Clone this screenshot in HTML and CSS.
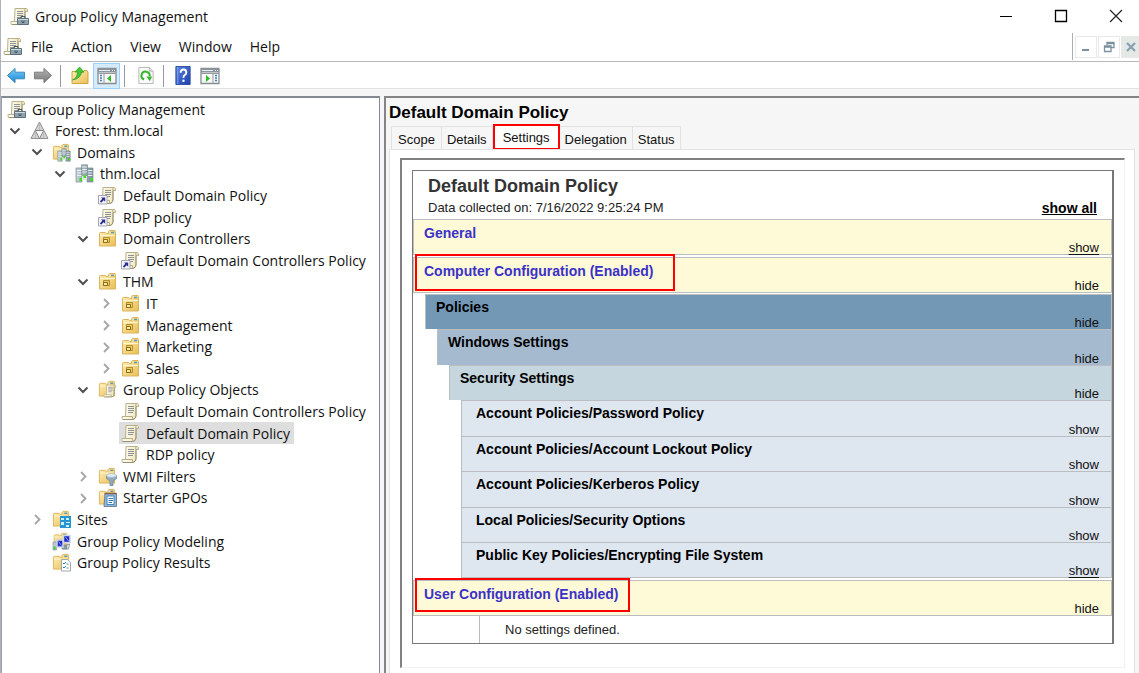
FILE: index.html
```html
<!DOCTYPE html>
<html lang="en">
<head>
<meta charset="utf-8">
<meta name="viewport" content="width=device-width, initial-scale=1">
<title>Group Policy Management</title>
<link rel="stylesheet" href="styles.css">
</head>
<body>
<svg class="sprite" aria-hidden="true">
  <defs>
    <linearGradient id="gold" x1="0" y1="0" x2="1" y2="1"><stop offset="0" stop-color="#fff0b8"/><stop offset="1" stop-color="#e9bd55"/></linearGradient>
    <linearGradient id="paper" x1="0" y1="0" x2="1" y2="0"><stop offset="0" stop-color="#fffef4"/><stop offset="1" stop-color="#efe6bd"/></linearGradient>
    <linearGradient id="blue" x1="0" y1="0" x2="0" y2="1"><stop offset="0" stop-color="#7fd0f8"/><stop offset="1" stop-color="#1385d6"/></linearGradient>
    <linearGradient id="gray" x1="0" y1="0" x2="0" y2="1"><stop offset="0" stop-color="#b5b5b5"/><stop offset="1" stop-color="#777777"/></linearGradient>
    <linearGradient id="help" x1="0" y1="0" x2="1" y2="1"><stop offset="0" stop-color="#5b86e0"/><stop offset="1" stop-color="#1c3fae"/></linearGradient>
    <linearGradient id="steel" x1="0" y1="0" x2="1" y2="0"><stop offset="0" stop-color="#c3d2d8"/><stop offset="1" stop-color="#7c909a"/></linearGradient>
  </defs>
  <symbol id="scroll" viewBox="0 0 19 19">
    <path d="M5 1.500h11.500q1.500.5 1 3h-2.500v9.500q-.5 3-3 3.500h-10q-1.500-1-1-3h3.500z" fill="url(#paper)" stroke="#b9b18a"/>
    <path d="M1.500 17.500H12q2.500-.5 3-3.500V4.500" fill="none" stroke="#9a9272"/>
    <path d="M4.500 14.500h7q-.5 2 .7 3M15 4.500q-1-2 .8-3" fill="none" stroke="#b5ac82"/>
    <path d="M7 4.500h6M7 6.500h6M7 8.500h6M7 10.500h5" stroke="#8f9297"/>
  </symbol>
  <symbol id="gpm" viewBox="0 0 19 19">
    <use href="#scroll" width="19" height="19"/>
    <path d="M7.500 11.500h11v6h-11z" fill="#8fa3ae" stroke="#5c707b"/>
    <path d="M8 12.500h10" stroke="#ccd9e0"/>
    <path d="M11 11V9.500h4V11M12 13.500v2h2v-2" fill="none" stroke="#465862"/>
  </symbol>
  <symbol id="folder" viewBox="0 0 19 19">
    <path d="M1.500 4.500q0-1 1-1h5l1 1h2V2.500l1-1h5.500l.5 1v14.500h-16z" fill="url(#gold)" stroke="#dbb45a"/>
    <path d="M2 6.500h15" stroke="#fff5cf"/><path d="M13 3.500h3" stroke="#4c9ac6" stroke-width="1.500"/>
  </symbol>
  <symbol id="ou" viewBox="0 0 19 19">
    <use href="#folder" width="19" height="19"/>
    <path d="M5.500 8.500h6v5h-6z" fill="#efcb62" stroke="#b08d2e"/><path d="M5.500 10.500h4v3h-4z" fill="#fae99e" stroke="#8c6c18"/>
  </symbol>
  <symbol id="servers" viewBox="0 0 19 19">
    <g fill="url(#steel)" stroke="#7b8b94" stroke-width=".7"><path d="M6.500.8h6v11h-6zM1 4h6v14H1zM12 4h6v14h-6z"/></g>
    <path d="M7 12h5v4H7z" fill="#dfe7ea"/>
    <path d="M2 6.500h4.500M2 9h4.500M2 11.500h4.500M12.800 6.500h4.500M12.800 9h4.500M12.800 11.500h4.500M7.200 3h4.600M7.200 5.500h4.600M7.200 8h4.600" stroke="#e8f2f5"/>
    <path d="M4.500 14h2.500v3H4.500zM15.500 14H18v3h-2.500zM8.500 11H11v3H8.500z" fill="#46dc17"/>
  </symbol>
  <symbol id="domains" viewBox="0 0 19 19"><use href="#folder" width="18" height="18"/><use href="#servers" x="5" y="5" width="14" height="14"/></symbol>
  <symbol id="forest" viewBox="0 0 19 19">
    <path d="M9.500 1 18 17.500H1z" fill="#d3d3d3" stroke="#909090"/><path d="M5.300 9.500h8.400l-4.200 8z" fill="#fafafa" stroke="#858585"/><path d="M9.500 2v7M5.300 10v7M13.700 10v7" fill="none" stroke="#b4b4b4" stroke-width=".8"/>
  </symbol>
  <symbol id="link" viewBox="0 0 19 19">
    <use href="#scroll" width="19" height="19"/>
    <path d="M.5 9.500H9V18H.5z" fill="#f5f5fb" stroke="#a5a5b5"/><path d="m2.500 16 3.500-3.500" fill="none" stroke="#292e8d" stroke-width="1.800"/><path d="M3 11.500h4.200v4.200z" fill="#292e8d"/>
  </symbol>
  <symbol id="gpos" viewBox="0 0 19 19"><use href="#folder" width="18" height="18"/><use href="#scroll" x="5" y="4" width="14" height="14"/></symbol>
  <symbol id="wmi" viewBox="0 0 19 19"><use href="#folder" width="18" height="18"/><path d="M8.500 8.500h10v3L15 14v4.500h-3V14l-3.500-2.500z" fill="#91a9ba" stroke="#7d95a6"/><ellipse cx="13.500" cy="8.500" rx="5" ry="2" fill="#dcebf4" stroke="#9ab0bf" stroke-width=".6"/></symbol>
  <symbol id="starter" viewBox="0 0 19 19"><use href="#folder" width="18" height="18"/><path d="M7 5.500h11.500v13H6z" fill="#8fb9dc" stroke="#7a7f8c"/><path d="M9 8h7v8.500H9z" fill="#f5fbff" stroke="#4887bb"/><path d="M10.500 10.500H15M10.500 12.500H15M10.500 14.500H14" stroke="#3b78ab"/><path d="M6.500 5.500h12" stroke="#8b5a45" stroke-width="1.500"/></symbol>
  <symbol id="sites" viewBox="0 0 19 19"><use href="#folder" width="18" height="18"/><path d="M8 6h11v12H8z" fill="#2994d2"/><path d="M9 8h3v2H9zM14 8h3v2h-3zM9 12h3v3H9zM14 12h4v1h-4zM14 15h3v2h-3z" fill="#c9f1ff"/></symbol>
  <symbol id="modeling" viewBox="0 0 19 19"><use href="#folder" width="17" height="15"/><path d="M1 10h3.500v8H1zM10 13h5v4h-5z" fill="url(#steel)" stroke="#889" stroke-width=".6"/><path d="M5 8h6v7H5zM11.500 3.500H18v7h-6.500z" fill="#2429c9" stroke="#ccd5e9" stroke-width="1.500"/><path d="m6.500 9.500 3 4M13.500 5l3 4" stroke="#77a6ff"/><path d="M1.500 14.500H3.500v3h-2z" fill="#35d42a"/><path d="m14.500 13 3-1-1 5h-6" fill="none" stroke="#8496a0"/></symbol>
  <symbol id="results" viewBox="0 0 19 19"><use href="#folder" width="18" height="18"/><path d="M9.500 6.500h6l3 3v8.500h-9z" fill="#fff" stroke="#a1a8ad"/><path d="m11 10 1 1 2-2M11 14l1 1 2-2" fill="none" stroke="#2486ba"/><path d="M14.500 11h2M14.500 15h2" stroke="#588199"/></symbol>
  <symbol id="back" viewBox="0 0 20 20"><path d="m1 10 8-7.500v4h10v7H9v4z" fill="url(#blue)" stroke="#3a86b5"/></symbol>
  <symbol id="forward" viewBox="0 0 20 20"><path d="m19 10-8-7.500v4H1v7h10v4z" fill="url(#gray)" stroke="#777"/></symbol>
  <symbol id="up" viewBox="0 0 19 19"><path d="M1.500 5.500h6l1 1h4l1-2h3l1 2v11h-16z" fill="url(#gold)" stroke="#d1a542"/><path d="M2 14Q7 12 7 6H4.500L9 1l4.500 5H11Q10.500 12.500 2 14" fill="#45c735" stroke="#279924" stroke-width=".7"/></symbol>
  <symbol id="pane" viewBox="0 0 20 18"><path d="M1 2h18v15H1z" fill="#f8f8f8" stroke="#878c93" stroke-width="1.300"/><path d="M1 2h18v4H1z" fill="#8d949d"/><path d="M2 4h11M15 4h1M17 4h1" stroke="#e6edf4"/><path d="M7 7v10M1 7h18" stroke="#999"/><path d="M3 9h2M3 11.500h2M3 14h2" stroke="#367fbd" stroke-width="1.400"/><path d="M14 8.500v7L10 12z" fill="#2ebc26"/></symbol>
  <symbol id="pane-right" viewBox="0 0 20 18"><path d="M1 2h18v15H1z" fill="#f8f8f8" stroke="#878c93" stroke-width="1.300"/><path d="M1 2h18v4H1z" fill="#8d949d"/><path d="M2 4h11M15 4h1M17 4h1" stroke="#e6edf4"/><path d="M13 7v10M1 7h18" stroke="#999"/><path d="M15 9h2M15 11.500h2M15 14h2" stroke="#367fbd" stroke-width="1.400"/><path d="M6 8.500v7l4-3.500z" fill="#2ebc26"/></symbol>
  <symbol id="refresh" viewBox="0 0 18 20"><path d="M1.500 1.500h11l4 4v13h-15z" fill="#fafafa" stroke="#b4b4b4"/><path d="M12.500 1.500v4h4" fill="#ddd" stroke="#bbb"/><path d="M7 14.200a4.300 4.300 0 1 1 5.800-3.500" fill="none" stroke="#35b72d" stroke-width="2.200"/><path d="M9.500 11h6L13 16z" fill="#35b72d"/></symbol>
  <symbol id="question" viewBox="0 0 18 20"><path d="M1.500.5h15v19h-15z" fill="url(#help)" stroke="#2c4c9d"/><path d="M3.500 1v18" stroke="#86a6ef"/><path d="M6.500 7q0-3.300 3-3.300T12.500 7q0 1.500-1.600 2.500T9.500 12.500" fill="none" stroke="#fff" stroke-width="2"/><circle cx="9.500" cy="15.500" r="1.300" fill="#fff"/></symbol>
  <symbol id="open" viewBox="0 0 12 12"><path d="m1.500 3.500 4.500 4.500 4.500-4.500" fill="none" stroke="#505050" stroke-width="2"/></symbol>
  <symbol id="closed" viewBox="0 0 12 12"><path d="m4 2 4.500 4.500L4 11" fill="none" stroke="#a5a5a5" stroke-width="1.800"/></symbol>
</svg>

<div class="window">
  <header class="titlebar">
    <svg class="icon"><use href="#gpm"/></svg>
    <h1 class="window-title">Group Policy Management</h1>
    <div class="window-buttons">
      <button aria-label="Minimize"><svg viewBox="0 0 14 14"><path d="M1 7.500h12" stroke="#000" fill="none"/></svg></button>
      <button aria-label="Maximize"><svg viewBox="0 0 14 14"><path d="M1.500 1.500h11v11h-11z" stroke="#000" fill="none" stroke-width="1.300"/></svg></button>
      <button aria-label="Close"><svg viewBox="0 0 14 14"><path d="m1 1 12 12M13 1 1 13" stroke="#222" fill="none" stroke-width="1.200"/></svg></button>
    </div>
  </header>

  <nav class="menubar" aria-label="Menu">
    <svg class="icon"><use href="#gpm"/></svg>
    <div class="menus"><button>File</button><button>Action</button><button>View</button><button>Window</button><button>Help</button></div>
    <div class="child-buttons">
      <button aria-label="Minimize child window"><svg viewBox="0 0 12 12"><path d="M2 9h7" stroke="#7b909d" stroke-width="2"/></svg></button>
      <button aria-label="Restore child window"><svg viewBox="0 0 12 12"><path d="M4 4V1.500h7v5H8M4 2.500h7M1.500 5h6.500v5.500H1.500zM1.500 6h6.500" fill="none" stroke="#7b909d" stroke-width="1.300"/></svg></button>
      <button class="child-close" aria-label="Close child window"><svg viewBox="0 0 12 12"><path d="m2 2 8 8M10 2l-8 8" stroke="#8ba0b3" stroke-width="2.300"/></svg></button>
    </div>
  </nav>

  <div class="toolbar" role="toolbar" aria-label="Tools">
    <button aria-label="Back"><svg><use href="#back"/></svg></button>
    <button aria-label="Forward"><svg><use href="#forward"/></svg></button>
    <span class="separator"></span>
    <button aria-label="Up one level"><svg><use href="#up"/></svg></button>
    <button class="pressed" aria-label="Show console tree" aria-pressed="true"><svg><use href="#pane"/></svg></button>
    <span class="separator tight"></span>
    <button aria-label="Refresh"><svg><use href="#refresh"/></svg></button>
    <span class="separator"></span>
    <button aria-label="Help topics"><svg><use href="#question"/></svg></button>
    <button aria-label="Show action pane"><svg><use href="#pane-right"/></svg></button>
  </div>

  <div class="panes">
    <nav class="tree-pane" aria-label="Console tree">
      <ul class="tree">
        <li class="root"><button class="node"><svg class="icon"><use href="#gpm"/></svg>Group Policy Management</button></li>
        <li class="level-1"><button class="toggle" aria-label="Collapse forest"><svg><use href="#open"/></svg></button><button class="node"><svg class="icon"><use href="#forest"/></svg>Forest: thm.local</button></li>
        <li class="level-2"><button class="toggle" aria-label="Collapse Domains"><svg><use href="#open"/></svg></button><button class="node"><svg class="icon"><use href="#domains"/></svg>Domains</button></li>
        <li class="level-3"><button class="toggle" aria-label="Collapse thm.local"><svg><use href="#open"/></svg></button><button class="node"><svg class="icon"><use href="#servers"/></svg>thm.local</button></li>
        <li class="level-4 leaf"><button class="node"><svg class="icon"><use href="#link"/></svg>Default Domain Policy</button></li>
        <li class="level-4 leaf"><button class="node"><svg class="icon"><use href="#link"/></svg>RDP policy</button></li>
        <li class="level-4"><button class="toggle" aria-label="Collapse Domain Controllers"><svg><use href="#open"/></svg></button><button class="node"><svg class="icon"><use href="#ou"/></svg>Domain Controllers</button></li>
        <li class="level-5 leaf"><button class="node"><svg class="icon"><use href="#link"/></svg>Default Domain Controllers Policy</button></li>
        <li class="level-4"><button class="toggle" aria-label="Collapse THM"><svg><use href="#open"/></svg></button><button class="node"><svg class="icon"><use href="#ou"/></svg>THM</button></li>
        <li class="level-5"><button class="toggle" aria-label="Expand IT"><svg><use href="#closed"/></svg></button><button class="node"><svg class="icon"><use href="#ou"/></svg>IT</button></li>
        <li class="level-5"><button class="toggle" aria-label="Expand Management"><svg><use href="#closed"/></svg></button><button class="node"><svg class="icon"><use href="#ou"/></svg>Management</button></li>
        <li class="level-5"><button class="toggle" aria-label="Expand Marketing"><svg><use href="#closed"/></svg></button><button class="node"><svg class="icon"><use href="#ou"/></svg>Marketing</button></li>
        <li class="level-5"><button class="toggle" aria-label="Expand Sales"><svg><use href="#closed"/></svg></button><button class="node"><svg class="icon"><use href="#ou"/></svg>Sales</button></li>
        <li class="level-4"><button class="toggle" aria-label="Collapse Group Policy Objects"><svg><use href="#open"/></svg></button><button class="node"><svg class="icon"><use href="#gpos"/></svg>Group Policy Objects</button></li>
        <li class="level-5 leaf"><button class="node"><svg class="icon"><use href="#scroll"/></svg>Default Domain Controllers Policy</button></li>
        <li class="level-5 leaf"><button class="node selected" aria-current="true"><svg class="icon"><use href="#scroll"/></svg>Default Domain Policy</button></li>
        <li class="level-5 leaf"><button class="node"><svg class="icon"><use href="#scroll"/></svg>RDP policy</button></li>
        <li class="level-4"><button class="toggle" aria-label="Expand WMI Filters"><svg><use href="#closed"/></svg></button><button class="node"><svg class="icon"><use href="#wmi"/></svg>WMI Filters</button></li>
        <li class="level-4"><button class="toggle" aria-label="Expand Starter GPOs"><svg><use href="#closed"/></svg></button><button class="node"><svg class="icon"><use href="#starter"/></svg>Starter GPOs</button></li>
        <li class="level-2"><button class="toggle" aria-label="Expand Sites"><svg><use href="#closed"/></svg></button><button class="node"><svg class="icon"><use href="#sites"/></svg>Sites</button></li>
        <li class="level-2 leaf"><button class="node"><svg class="icon"><use href="#modeling"/></svg>Group Policy Modeling</button></li>
        <li class="level-2 leaf"><button class="node"><svg class="icon"><use href="#results"/></svg>Group Policy Results</button></li>
      </ul>
    </nav>

    <main class="details">
      <h2 class="details-title">Default Domain Policy</h2>
      <div class="tabs" role="tablist">
        <button role="tab">Scope</button>
        <button role="tab">Details</button>
        <button role="tab" class="active" aria-selected="true">Settings</button>
        <button role="tab">Delegation</button>
        <button role="tab">Status</button>
      </div>
      <div class="tab-page" role="tabpanel">
        <div class="viewer">
          <article class="report">
            <header class="report-head">
              <div>
                <h3>Default Domain Policy</h3>
                <p>Data collected on: 7/16/2022 9:25:24 PM</p>
              </div>
              <a href="#all">show all</a>
            </header>
            <section class="band section"><h4>General</h4><a class="underlined" href="#general">show</a></section>
            <section class="band section"><h4 class="marked wide">Computer Configuration (Enabled)</h4><a href="#computer">hide</a></section>
            <div class="settings">
              <section class="band policies"><h5>Policies</h5><a href="#policies">hide</a></section>
              <section class="band windows"><h5>Windows Settings</h5><a href="#windows">hide</a></section>
              <section class="band security"><h5>Security Settings</h5><a href="#security">hide</a></section>
              <section class="band item"><h5>Account Policies/Password Policy</h5><a href="#password">show</a></section>
              <section class="band item"><h5>Account Policies/Account Lockout Policy</h5><a href="#lockout">show</a></section>
              <section class="band item"><h5>Account Policies/Kerberos Policy</h5><a href="#kerberos">show</a></section>
              <section class="band item"><h5>Local Policies/Security Options</h5><a href="#options">show</a></section>
              <section class="band item"><h5>Public Key Policies/Encrypting File System</h5><a class="underlined" href="#efs">show</a></section>
            </div>
            <section class="band section user"><h4 class="marked">User Configuration (Enabled)</h4><a href="#user">hide</a></section>
            <div class="empty"><p>No settings defined.</p></div>
          </article>
        </div>
      </div>
    </main>
  </div>
</div>
</body>
</html>
```
FILE: styles.css
```css
* { box-sizing: border-box; }
html, body { margin: 0; height: 100%; }
body {
  overflow: hidden;
  background: #fff;
  color: #111;
  font-family: "Open Sans", "Noto Sans", sans-serif;
  font-size: 14px;
}
h1, h2, h3, h4, h5, p, ul { margin: 0; padding: 0; font-size: inherit; font-weight: normal; }
button { margin: 0; padding: 0; border: 0; background: none; color: inherit; font: inherit; }
a { color: inherit; text-decoration: none; }
svg { display: block; flex: none; }
.sprite { position: absolute; width: 0; height: 0; }
.icon { width: 19px; height: 19px; }

.window { display: flex; flex-direction: column; height: 100%; border-left: 1px solid #aeb3bd; }

.titlebar { display: flex; align-items: center; gap: 6px; height: 32px; padding-left: 9px; }
.window-title { flex: 1; }
.window-buttons { display: flex; margin-right: -4px; }
.window-buttons button { display: grid; place-items: center; width: 55px; height: 30px; }
.window-buttons svg { width: 14px; height: 14px; }

.menubar { display: flex; align-items: center; gap: 9px; height: 30px; padding-left: 2px; border-bottom: 1px solid #b5b9bc; }
.menus { display: flex; flex: 1; gap: 18px; }
.child-buttons { display: flex; align-items: center; gap: 1px; height: 27px; margin-right: -2px; padding-left: 2px; border-left: 1px solid #a9b0b5; }
.child-buttons button { display: grid; place-items: center; width: 22px; height: 22px; border: 1px solid #e9e9e9; }
.child-buttons svg { width: 12px; height: 12px; }
.child-buttons .child-close { width: 20px; background: #e4e9e6; }

.toolbar { display: flex; align-items: center; height: 27px; padding: 1px 0 0 1px; border-bottom: 1px solid #e2e2e2; }
.toolbar button { display: grid; place-items: center; width: 27px; height: 26px; }
.toolbar svg { width: 20px; height: 19px; }
.toolbar .pressed { border: 1px solid #99d1ff; background: #d5ebfa; }
.toolbar .separator { width: 1px; height: 22px; margin: 0 5px 0 4px; background: #999; }
.toolbar .tight { margin: 0 7px 0 4px; }

.panes { display: grid; grid-template-columns: 379px minmax(0, 1fr); flex: 1; min-height: 0; padding-top: 7px; background: #f6f6f6; }
.tree-pane { overflow: hidden; border: 1px solid #848a94; border-width: 2px 1px 0; border-left-color: #9aa0a8; background: #fff; }
.tree { display: grid; grid-auto-rows: 22px 21px 22px 21px 22px; list-style: none; }
.tree li { display: flex; align-items: center; }
.tree .toggle { width: 19px; }
.toggle svg { width: 12px; height: 12px; }
.node { display: flex; align-items: center; gap: 6px; height: 100%; padding: 0 4px 0 2px; white-space: nowrap; }
.node.selected { background: #dedede; }
.root { padding-left: 3px; }
.level-1 { padding-left: 7px; }
.level-2 { padding-left: 29px; }
.level-3 { padding-left: 52px; }
.level-4 { padding-left: 75px; }
.level-5 { padding-left: 98px; }
.leaf::before { content: ""; width: 19px; }

.details {
  display: flex;
  flex-direction: column;
  min-width: 0;
  min-height: 0;
  margin-left: 4px;
  padding: 3px 4px 0 3px;
  border-top: 2px solid #858585;
  border-left: 2px solid #858585;
  font-family: "Liberation Sans", Arial, sans-serif;
  font-size: 13px;
}
.details-title { font-size: 17px; font-weight: bold; line-height: 23px; color: #000; }
.tabs { display: flex; align-items: flex-end; padding-left: 2px; }
.tabs button { height: 23px; padding: 2px 5px 0; border: 1px solid #e2e2e2; border-width: 1px 1px 0 0; }
.tabs button:first-child { padding: 2px 6px 0; border-left-width: 1px; }
.tabs .active { height: 26px; margin-bottom: -1px; padding: 0 8px; border: 2px solid #f00; background: #fff; }
.tab-page { flex: 1; min-height: 0; padding: 8px 9px 6px 10px; border: 1px solid #e3e3e3; border-bottom: 0; background: #fff; }
.viewer { padding: 10px 10px 23px; border: 1px solid #f1f1f1; border-top: 2px solid #808080; border-left: 2px solid #808080; }
.report { border: 1px solid #777; border-right-width: 2px; color: #222; }
.report-head { display: flex; align-items: flex-end; justify-content: space-between; height: 48px; padding: 0 15px 2px; }
.report-head h3 { font-size: 18px; font-weight: bold; line-height: 26px; color: #333; }
.report-head p { line-height: 18px; }
.report-head a { font-size: 14px; font-weight: bold; line-height: 18px; color: #000; text-decoration: underline; }

.band { display: flex; align-items: flex-start; justify-content: space-between; border: 1px solid #bbbec0; border-bottom: 0; padding-right: 12px; color: #111; }
.band h4, .band h5 { padding-left: 10px; font-size: 14px; font-weight: bold; line-height: 26px; }
.band h5 { line-height: 24px; color: #000; }
.band a { align-self: flex-end; line-height: 12px; }
.band .underlined { text-decoration: underline; text-underline-offset: 2px; }
.section { height: 36px; margin-bottom: 2px; border-bottom: 1px solid #bbbec0; background: #fef9d7; }
.section h4 { color: #3a32c8; }
.section + .settings { margin-top: -1px; }
.marked { position: relative; }
.marked::after { content: ""; position: absolute; inset: -3px -12px -5px 1px; border: 2px solid #f00; }
.marked.wide::after { inset: -4px -22px -7px 1px; }

.settings { display: grid; grid-auto-rows: 35px 36px; padding-bottom: 2px; }
.policies { margin-left: 12px; background: #7398b6; }
.windows { margin-left: 24px; background: #a5bacf; }
.security { margin-left: 36px; background: #c5d6de; }
.item { margin-left: 48px; background: #dee6ef; }
.band.item h5 { padding-left: 14px; }
.settings .item:last-child { border-bottom: 1px solid #bbbec0; }
.section.user { margin-bottom: 0; }
.empty { display: flex; height: 27px; padding-left: 66px; }
.empty p { flex: 1; padding-left: 25px; border-left: 1px solid #bbb; line-height: 27px; }
```
